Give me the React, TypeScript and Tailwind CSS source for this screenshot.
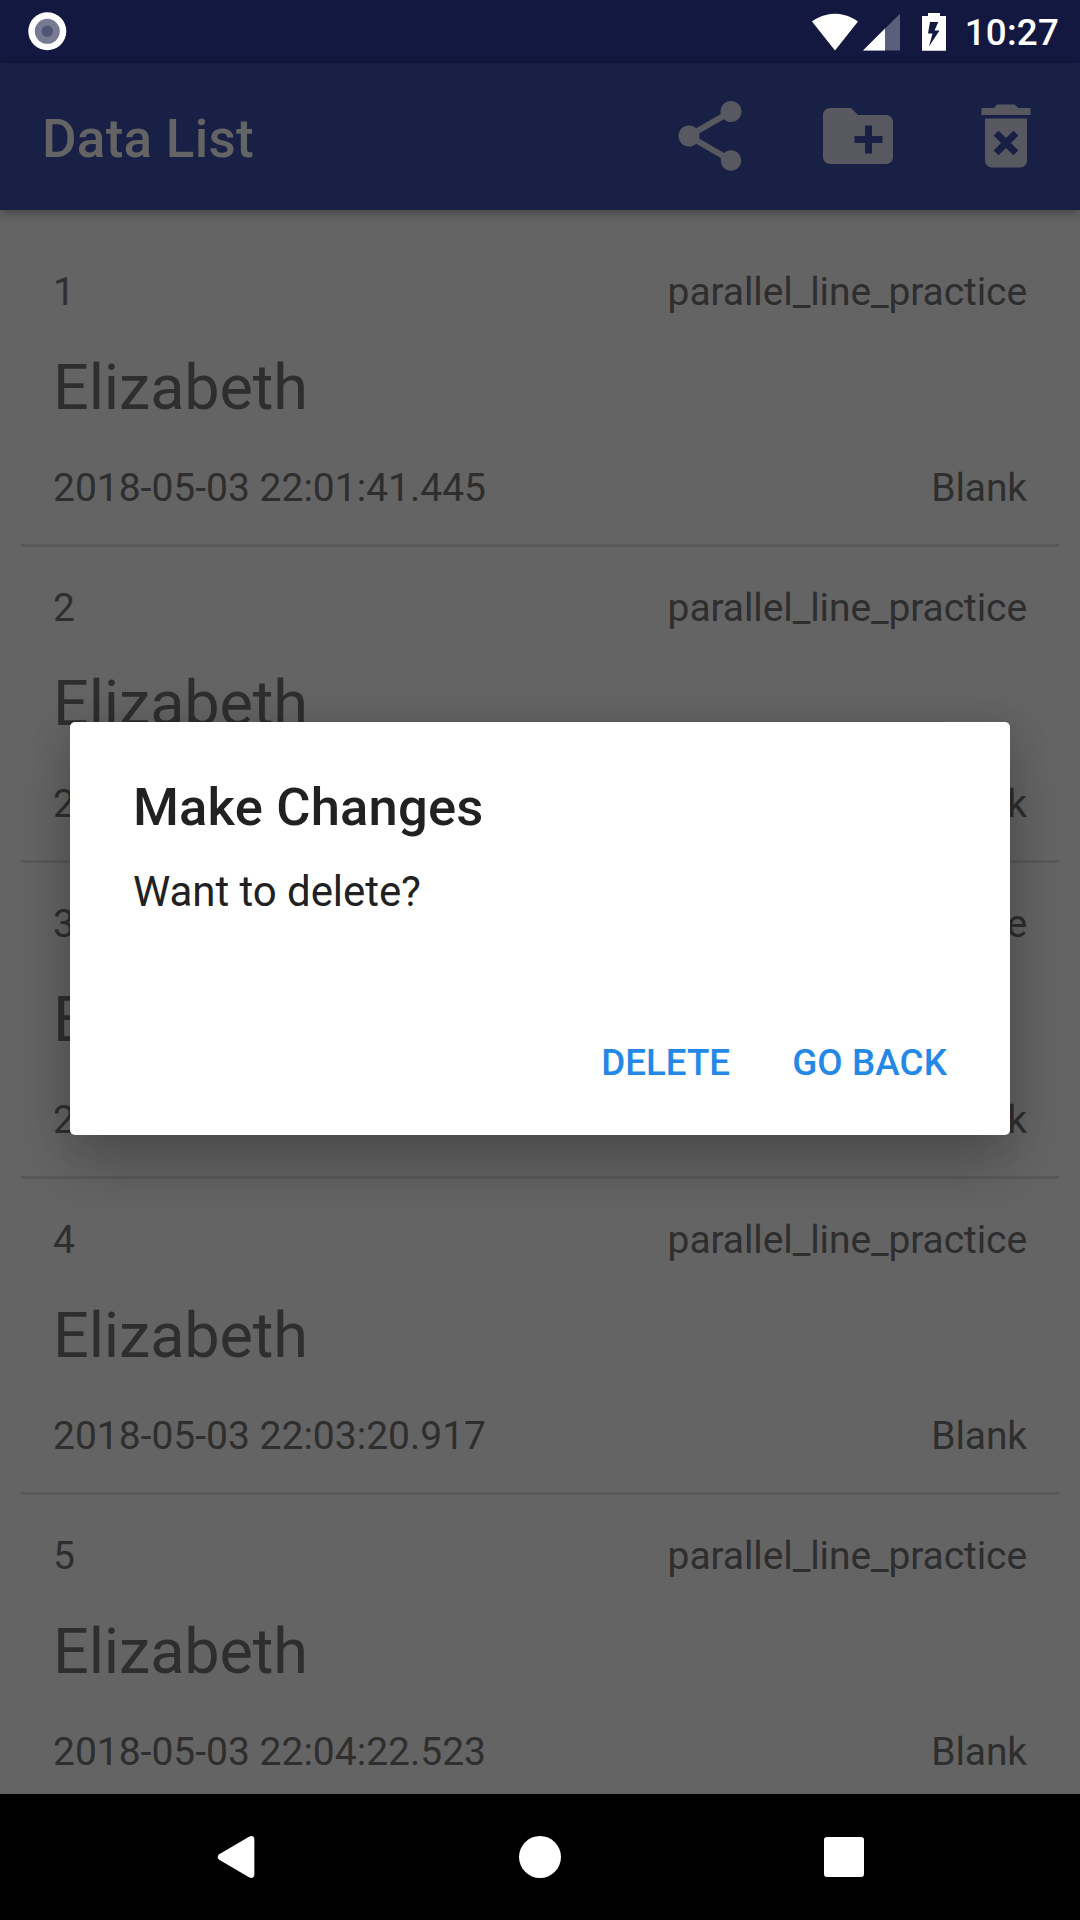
import React from "react";

const rows = [
  { id: 1, time: "2018-05-03 22:01:41.445" },
  { id: 2, time: "2018-05-03 22:02:12.308" },
  { id: 3, time: "2018-05-03 22:02:48.671" },
  { id: 4, time: "2018-05-03 22:03:20.917" },
  { id: 5, time: "2018-05-03 22:04:22.523" },
];

function StatusBar() {
  return (
    <div className="flex h-[63px] shrink-0 items-center bg-[#131840] pl-[28px] pr-[21px]">
      <svg className="size-[39px]" viewBox="0 0 39 39">
        <circle cx="19.3" cy="19.3" r="19" fill="#fff" />
        <circle cx="19.3" cy="19.3" r="12.5" fill="#787a93" />
        <circle cx="19.3" cy="19.3" r="5.7" fill="#515575" />
      </svg>
      <div className="ml-auto flex items-center text-white">
        <svg className="h-[38px] w-[46px]" viewBox="0 0 46 38">
          <path d="M23 37.5L46 8.6C45 7.9 36.3 0.7 23 0.7S1 7.9 0 8.6z" fill="#fff" />
        </svg>
        <svg className="ml-[5px] h-[38px] w-[37px]" viewBox="0 0 37 38">
          <path d="M37 0.7V37.5H0z" fill="#5c5f7b" />
          <path d="M22 15.6V37.5H0z" fill="#fff" />
        </svg>
        <svg className="ml-[22px] h-[38px] w-[24px]" viewBox="0 0 24 38">
          <path
            fillRule="evenodd"
            d="M6 0H18V3H24V37.7H0V3H6zM8 9L6 20.5H10.5L7 33.5L17.5 17.5H12.5L16.3 9z"
            fill="#fff"
          />
        </svg>
        <span className="ml-[19px] pt-[3px] text-[36.75px] leading-[42px] font-medium tracking-[0.2px]">10:27</span>
      </div>
    </div>
  );
}

function ActionIcon({ d }: { d: string }) {
  return (
    <svg className="size-[84px]" viewBox="0 0 24 24" fill="#585860">
      <path d={d} />
    </svg>
  );
}

function AppBar() {
  return (
    <header className="relative z-10 flex h-[147px] shrink-0 items-center bg-[#182045] pl-[42px] pr-[32.5px] shadow-[0_3px_10px_rgba(0,0,0,0.32)]">
      <h1 className="pt-[4px] text-[53px] leading-[62px] font-medium tracking-[0.25px] text-[#646464]">Data List</h1>
      <div className="mb-[2px] ml-auto flex gap-[63.75px]">
        <ActionIcon d="M18 16.08c-.76 0-1.44.3-1.96.77L8.91 12.7c.05-.23.09-.46.09-.7s-.04-.47-.09-.7l7.05-4.11c.54.5 1.25.81 2.04.81 1.66 0 3-1.34 3-3s-1.34-3-3-3-3 1.34-3 3c0 .24.04.47.09.7L8.04 9.81C7.5 9.31 6.79 9 6 9c-1.66 0-3 1.34-3 3s1.34 3 3 3c.79 0 1.5-.31 2.04-.81l7.12 4.16c-.05.21-.08.43-.08.65 0 1.61 1.31 2.92 2.92 2.92 1.61 0 2.92-1.31 2.92-2.92s-1.31-2.92-2.92-2.92z" />
        <ActionIcon d="M20 6h-8l-2-2H4c-1.11 0-1.99.89-1.99 2L2 18c0 1.11.89 2 2 2h16c1.11 0 2-.89 2-2V8c0-1.11-.89-2-2-2zm-1 8h-3v3h-2v-3h-3v-2h3V9h2v3h3v2z" />
        <ActionIcon d="M6 19c0 1.1.9 2 2 2h8c1.1 0 2-.9 2-2V7H6v12zm2.46-7.12l1.41-1.41L12 12.59l2.12-2.12 1.41 1.41L13.41 14l2.12 2.12-1.41 1.41L12 15.41l-2.12 2.12-1.41-1.41L10.59 14l-2.13-2.12zM15.5 4l-1-1h-5l-1 1H5v2h14V4z" />
      </div>
    </header>
  );
}

function Row({ id, time }: { id: number; time: string }) {
  return (
    <li className="flex h-[316px] shrink-0 flex-col border-b-[3px] border-[#595959] px-[32px] pt-[38px] text-[39px] leading-[46px]">
      <div className="flex justify-between">
        <span>{id}</span>
        <span className="tracking-[-0.1px]">parallel_line_practice</span>
      </div>
      <div className="mt-[36px] text-[63px] leading-[74px] tracking-[-0.13px]">Elizabeth</div>
      <div className="mt-[40px] flex justify-between">
        <span>{time}</span>
        <span className="tracking-[-0.1px]">Blank</span>
      </div>
    </li>
  );
}

function Dialog() {
  return (
    <div className="absolute top-[722px] left-[70px] z-20 flex h-[413px] w-[940px] flex-col rounded-[5px] bg-white px-[63px] pt-[54px] text-[#212121] shadow-[0_32px_56px_rgba(0,0,0,0.2),0_0_40px_rgba(0,0,0,0.12)]">
      <h2 className="text-[52.5px] leading-[62px] font-medium tracking-[0.2px]">Make Changes</h2>
      <p className="mt-[29px] text-[42px] leading-[50px] tracking-[-0.06px]">Want to delete?</p>
      <div className="mt-[125px] flex justify-end gap-[62px] text-[36.75px] leading-[42px] font-medium text-[#2388e6]">
        <button>DELETE</button>
        <button className="tracking-[0.12px]">GO BACK</button>
      </div>
    </div>
  );
}

function NavBar() {
  return (
    <nav className="flex h-[126px] shrink-0 items-center justify-between bg-black pl-[217px] pr-[216px]">
      <svg className="h-[43px] w-[38px]" viewBox="0 0 38 43">
        <path d="M2.2 18.2L32 0.7Q37.4-1.5 37.4 4.2V37.8Q37.4 43.5 32 41.3L2.2 23.8Q-1 21 2.2 18.2z" fill="#fff" />
      </svg>
      <div className="size-[42px] rounded-full bg-white" />
      <div className="size-[40px] rounded-[3px] bg-white" />
    </nav>
  );
}

export default function App() {
  return (
    <div className="relative flex h-[1920px] w-[1080px] flex-col overflow-hidden bg-[#646464] font-['Roboto',sans-serif] text-[#2e2e2e]">
      <StatusBar />
      <AppBar />
      <ul className="flex min-h-0 flex-1 flex-col overflow-hidden px-[21px] pt-[21px]">
        {rows.map((row) => (
          <Row key={row.id} id={row.id} time={row.time} />
        ))}
      </ul>
      <NavBar />
      <Dialog />
    </div>
  );
}
